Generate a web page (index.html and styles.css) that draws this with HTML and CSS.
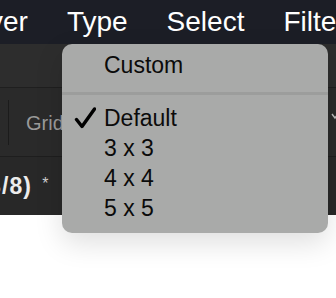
FILE: index.html
```html
<!DOCTYPE html>
<html>
<head>
<meta charset="utf-8">
<link rel="stylesheet" href="styles.css">
</head>
<body>
<div class="menubar">
  <span class="mitem first">ver</span>
  <span class="mitem">Type</span>
  <span class="mitem">Select</span>
  <span class="mitem">Filter</span>
</div>
<div class="optbar"></div>
<div class="toolbar">
  <span class="divider"></span>
  <span class="grid-label">Grid</span>
  <svg class="chev" width="8" height="8" viewBox="0 0 8 8"><path d="M1 2 L4 6 L7 2" fill="none" stroke="#bdbdbd" stroke-width="1.4"/></svg>
</div>
<div class="tabbar">
  <span class="tabtext">RGB/8) <span class="star">*</span></span>
</div>

<div class="menu">
  <div class="row"><span class="check"></span><span>Custom</span></div>
  <div class="sep"></div>
  <div class="row"><span class="check"><svg width="22" height="22" viewBox="0 0 22 22"><path d="M2.5 12.5 L8 19.5 L20.5 2" fill="none" stroke="#000" stroke-width="3.4" stroke-linecap="round" stroke-linejoin="round"/></svg></span><span>Default</span></div>
  <div class="row"><span class="check"></span><span>3 x 3</span></div>
  <div class="row"><span class="check"></span><span>4 x 4</span></div>
  <div class="row"><span class="check"></span><span>5 x 5</span></div>
</div>
</body>
</html>
```

FILE: styles.css
```css
html, body {
  margin: 0;
  padding: 0;
  background: #ffffff;
  overflow: hidden;
}
body {
  width: 336px;
  height: 298px;
  position: relative;
  font-family: "Liberation Sans", Arial, sans-serif;
}
.menubar {
  height: 44px;
  background: #1c1e26;
  display: flex;
  align-items: center;
  gap: 39px;
  white-space: nowrap;
  overflow: hidden;
}
.mitem {
  color: #ffffff;
  font-size: 28px;
  line-height: 44px;
}
.mitem.first {
  margin-left: -11px;
}
.optbar {
  height: 43px;
  background: #2d2d2d;
  border-bottom: 1px solid #1f1f1f;
}
.toolbar {
  height: 68px;
  background: #2a2a2a;
  border-bottom: 1px solid #1e1e1e;
  display: flex;
  align-items: center;
  position: relative;
}
.divider {
  width: 1px;
  height: 45px;
  background: #1b1b1b;
  margin-left: 8px;
}
.grid-label {
  margin-left: 17px;
  padding-top: 3px;
  font-size: 20px;
  color: #9a9a9a;
}
.chev {
  position: absolute;
  left: 331px;
  top: 24px;
}
.tabbar {
  height: 58px;
  background: #282828;
  display: flex;
  align-items: center;
  overflow: hidden;
  white-space: nowrap;
}
.tabtext {
  font-size: 23px;
  color: #ececec;
  margin-left: -52px;
  font-weight: bold;
  letter-spacing: 1px;
  word-spacing: 3px;
}
.star {
  font-size: 16px;
  vertical-align: 5px;
  font-weight: normal;
  color: #cfcfcf;
}
.menu {
  position: absolute;
  left: 62px;
  top: 44px;
  width: 266px;
  box-sizing: border-box;
  padding: 6px 0 10px;
  background: #a9aaa9;
  border-radius: 10px;
  box-shadow: 0 10px 28px rgba(0, 0, 0, 0.13), 0 1px 0 rgba(255,255,255,0.15);
}
.row {
  display: flex;
  align-items: center;
  height: 30px;
  font-size: 23px;
  line-height: 30px;
  color: #0b0b0b;
}
.check {
  width: 42px;
  display: flex;
  justify-content: flex-end;
  padding-right: 8px;
  box-sizing: border-box;
}
.check svg {
  display: block;
}
.sep {
  height: 3px;
  background: #9c9d9c;
  margin: 12px 0 8px;
}
```
